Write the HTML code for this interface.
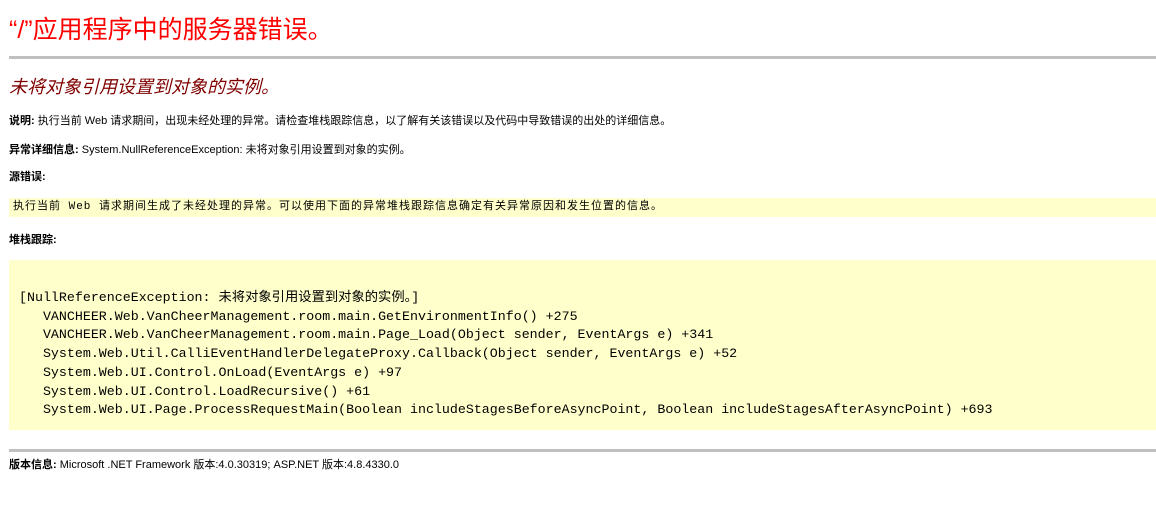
<!DOCTYPE html>
<html><head><meta charset="utf-8"><style>
body{margin:0;background:#fff;font-family:"Liberation Sans","Noto Sans CJK SC",sans-serif;color:#000;}
.a{position:absolute;white-space:nowrap;}
h1{position:absolute;left:9px;top:14px;margin:0;font-weight:normal;font-size:25px;color:#f00;font-family:"Liberation Sans","Noto Sans CJK SC",sans-serif;line-height:32px;}
.hr{position:absolute;left:9px;right:0;height:3px;background:#c0c0c0;}
h2{position:absolute;left:9px;top:74px;margin:0;font-weight:normal;font-style:italic;font-size:18px;color:#800000;line-height:26px;}
.s{font-size:11px;line-height:14px;}
.s b{font-weight:bold;}
.box{position:absolute;left:9px;right:0;background:#ffffcc;}
pre{margin:0;font-family:"Liberation Mono","Noto Sans CJK SC",monospace;}
</style></head><body>
<h1>“/”应用程序中的服务器错误。</h1>
<div class="hr" style="top:56px"></div>
<h2>未将对象引用设置到对象的实例。</h2>
<div class="a s" style="left:9px;top:114px"><b>说明:</b> 执行当前 Web 请求期间，出现未经处理的异常。请检查堆栈跟踪信息，以了解有关该错误以及代码中导致错误的出处的详细信息。</div>
<div class="a s" style="left:9px;top:143px"><b>异常详细信息:</b> System.NullReferenceException: 未将对象引用设置到对象的实例。</div>
<div class="a s" style="left:9px;top:170px"><b>源错误:</b></div>
<div class="box" style="top:198px;height:19px"><pre style="position:absolute;left:4px;top:3px;font-size:11px;line-height:13px;letter-spacing:1px">执行当前 Web 请求期间生成了未经处理的异常。可以使用下面的异常堆栈跟踪信息确定有关异常原因和发生位置的信息。</pre></div>
<div class="a s" style="left:9px;top:233px"><b>堆栈跟踪:</b></div>
<div class="box" style="top:260px;height:170px"><pre style="position:absolute;left:10px;top:29px;font-size:13.3px;line-height:18.7px">[NullReferenceException: 未将对象引用设置到对象的实例。]
   VANCHEER.Web.VanCheerManagement.room.main.GetEnvironmentInfo() +275
   VANCHEER.Web.VanCheerManagement.room.main.Page_Load(Object sender, EventArgs e) +341
   System.Web.Util.CalliEventHandlerDelegateProxy.Callback(Object sender, EventArgs e) +52
   System.Web.UI.Control.OnLoad(EventArgs e) +97
   System.Web.UI.Control.LoadRecursive() +61
   System.Web.UI.Page.ProcessRequestMain(Boolean includeStagesBeforeAsyncPoint, Boolean includeStagesAfterAsyncPoint) +693</pre></div>
<div class="hr" style="top:449px"></div>
<div class="a s" style="left:9px;top:458px"><b>版本信息:</b> Microsoft .NET Framework 版本:4.0.30319; ASP.NET 版本:4.8.4330.0</div>
</body></html>
